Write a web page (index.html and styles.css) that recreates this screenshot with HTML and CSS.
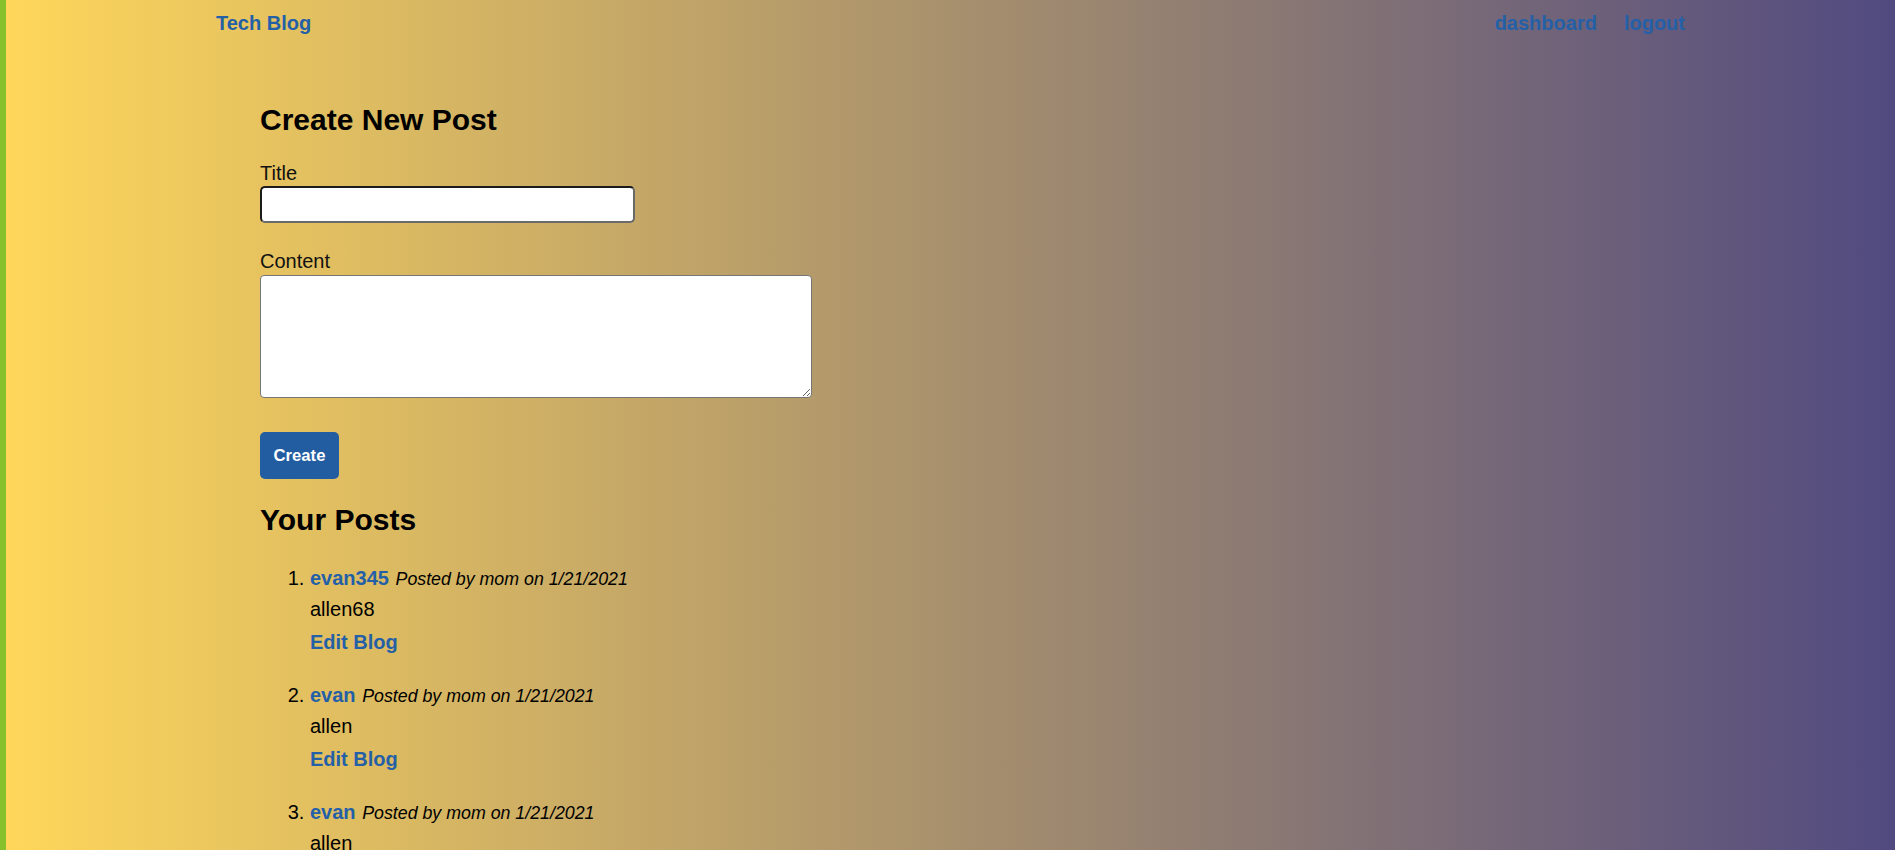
FILE: index.html
```html
<!DOCTYPE html>
<html lang="en">
<head>
<meta charset="utf-8">
<title>Tech Blog</title>
<link rel="stylesheet" href="styles.css">
</head>
<body>
<header class="nav">
  <a class="nav-link" href="#">Tech Blog</a>
  <div class="nav-right">
    <a class="nav-link" href="#">dashboard</a>
    <a class="nav-link" href="#">logout</a>
  </div>
</header>
<main class="main">
  <h2 class="heading">Create New Post</h2>
  <form class="post-form">
    <label class="field-label" for="title">Title</label>
    <input class="title-input" id="title" type="text">
    <label class="field-label content-label" for="content">Content</label>
    <textarea class="content-input" id="content"></textarea>
    <button class="create-btn" type="button">Create</button>
  </form>
  <h2 class="heading">Your Posts</h2>
  <ol class="posts">
    <li class="post">
      <div class="post-head"><a class="post-title" href="#">evan345</a> <em class="post-meta">Posted by mom on 1/21/2021</em></div>
      <div class="post-body">allen68</div>
      <a class="post-edit" href="#">Edit Blog</a>
    </li>
    <li class="post">
      <div class="post-head"><a class="post-title" href="#">evan</a> <em class="post-meta">Posted by mom on 1/21/2021</em></div>
      <div class="post-body">allen</div>
      <a class="post-edit" href="#">Edit Blog</a>
    </li>
    <li class="post">
      <div class="post-head"><a class="post-title" href="#">evan</a> <em class="post-meta">Posted by mom on 1/21/2021</em></div>
      <div class="post-body">allen</div>
      <a class="post-edit" href="#">Edit Blog</a>
    </li>
  </ol>
</main>
</body>
</html>
```

FILE: styles.css
```css
html, body {
  margin: 0;
  padding: 0;
}

body {
  min-height: 100vh;
  border-left: 6px solid #86c12b;
  background: linear-gradient(to right, #ffd75a, #514a80);
  background-attachment: fixed;
  font-family: "Liberation Sans", Arial, sans-serif;
  font-size: 20px;
  line-height: 23px;
  color: #000;
}

a {
  color: #2460a7;
  font-weight: bold;
  text-decoration: none;
}

.nav {
  display: flex;
  justify-content: space-between;
  padding: 12px 210px 0 210px;
  line-height: 23px;
}

.nav-right {
  display: flex;
  gap: 27px;
}

.main {
  padding: 68px 0 0 254px;
}

.heading {
  margin: 0 0 25px 0;
  font-size: 30px;
  line-height: 34px;
  font-weight: bold;
}

.post-form {
  display: flex;
  flex-direction: column;
  align-items: flex-start;
  margin-bottom: 24px;
}

.field-label {
  display: block;
  color: #111;
}

.content-label {
  margin-top: 27px;
}

.title-input {
  box-sizing: border-box;
  width: 375px;
  height: 37px;
  margin: 1px 0 0 0;
  border: 2px solid;
  border-color: #1b1b1b #6a6a6a #6a6a6a #1b1b1b;
  border-radius: 5px;
  background: #fff;
  font-size: 17px;
  font-family: "Liberation Sans", Arial, sans-serif;
}

.content-input {
  box-sizing: border-box;
  width: 552px;
  height: 123px;
  margin: 2px 0 0 0;
  border: 1px solid #767676;
  border-radius: 4px;
  background: #fff;
  font-size: 17px;
  font-family: "Liberation Sans", Arial, sans-serif;
}

.create-btn {
  box-sizing: border-box;
  width: 79px;
  height: 47px;
  margin-top: 34px;
  padding: 0;
  border: none;
  border-radius: 5px;
  background: #225da2;
  color: #fff;
  font-family: "Liberation Sans", Arial, sans-serif;
  font-size: 16.67px;
  font-weight: bold;
}

.posts {
  margin: 0;
  padding: 5px 0 0 50px;
}

.post {
  margin-bottom: 30px;
}

.post-head {
  margin-bottom: 7px;
}

.post-meta {
  font-size: 17.8px;
  margin-left: 1px;
}

.post-body {
  margin-bottom: 10px;
}

.post-edit {
  display: block;
}
```
